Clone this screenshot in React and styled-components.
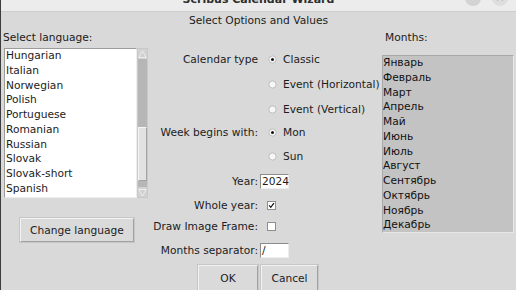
import React from 'react';
import styled, { createGlobalStyle } from 'styled-components';

const languages = [
  'Hungarian', 'Italian', 'Norwegian', 'Polish', 'Portuguese',
  'Romanian', 'Russian', 'Slovak', 'Slovak-short', 'Spanish',
];

const months = [
  'Январь', 'Февраль', 'Март', 'Апрель', 'Май', 'Июнь',
  'Июль', 'Август', 'Сентябрь', 'Октябрь', 'Ноябрь', 'Декабрь',
];

const GlobalStyle = createGlobalStyle`
  html, body {
    margin: 0;
    padding: 0;
    background: #d9d9d9;
  }
  body {
    font-family: "DejaVu Sans", "Noto Sans CJK SC", sans-serif;
    font-size: 10.67px;
    color: #1c1c1c;
  }
`;

const Radio = ({ checked, children }) => (
  <RadioItem>
    <svg width="9" height="9" viewBox="0 0 9 9">
      <circle cx="4.5" cy="4.5" r="3.6" fill="#f7f7f7" stroke="#b4b4b4" strokeWidth="0.8" />
      {checked && <circle cx="4.5" cy="4.5" r="1.5" fill="#111" />}
    </svg>
    <span>{children}</span>
  </RadioItem>
);

const Check = ({ checked }) => (
  <CheckBox>
    {checked && (
      <svg width="9" height="9" viewBox="0 0 9 9">
        <path d="M1.5 4.2 L3.6 6.8 L7.6 1.6" fill="none" stroke="#111" strokeWidth="1.6" />
      </svg>
    )}
  </CheckBox>
);

const Arrow = ({ down }) => (
  <ArrowBox>
    <svg width="9" height="9" viewBox="0 0 9 9">
      <path
        d={down ? 'M1 1.5 L8 1.5 L4.5 8 Z' : 'M1 7.5 L8 7.5 L4.5 1 Z'}
        fill="#cfcfcf"
        stroke="#f4f4f4"
        strokeWidth="0.8"
      />
    </svg>
  </ArrowBox>
);

const App = () => (
  <>
    <GlobalStyle />
    <Window>
      <TitleBar>
        <span />
        <TitleText>Scribus Calendar Wizard</TitleText>
        <WinButtons>
          <WinButton />
          <WinButton light>×</WinButton>
        </WinButtons>
      </TitleBar>
      <Header>Select Options and Values</Header>
      <Body>
        <LeftCol>
          <ColLabel>Select language:</ColLabel>
          <ListFrame>
            <LangList>
              {languages.map((lang) => (
                <Item key={lang}>{lang}</Item>
              ))}
            </LangList>
            <Scrollbar>
              <Arrow />
              <Trough>
                <TroughGap grow={70} />
                <Thumb grow={54} />
                <TroughGap grow={6} />
              </Trough>
              <Arrow down />
            </Scrollbar>
          </ListFrame>
          <Button wide>Change language</Button>
        </LeftCol>

        <MiddleCol>
          <Row h={26}>
            <Label>Calendar type</Label>
            <Control><Radio checked>Classic</Radio></Control>
          </Row>
          <Row h={25}>
            <Label />
            <Control><Radio>Event (Horizontal)</Radio></Control>
          </Row>
          <Row h={24}>
            <Label />
            <Control><Radio>Event (Vertical)</Radio></Control>
          </Row>
          <Row h={23}>
            <Label>Week begins with:</Label>
            <Control><Radio checked>Mon</Radio></Control>
          </Row>
          <Row h={25}>
            <Label />
            <Control><Radio>Sun</Radio></Control>
          </Row>
          <Row h={25}>
            <Label>Year:</Label>
            <Control><Entry>2024</Entry></Control>
          </Row>
          <Row h={23}>
            <Label>Whole year:</Label>
            <Control><Check checked /></Control>
          </Row>
          <Row h={18}>
            <Label>Draw Image Frame:</Label>
            <Control><Check /></Control>
          </Row>
          <Row h={30}>
            <Label>Months separator:</Label>
            <Control><Entry>/</Entry></Control>
          </Row>
          <ButtonRow>
            <Button w={60}>OK</Button>
            <Button w={57}>Cancel</Button>
          </ButtonRow>
        </MiddleCol>

        <RightCol>
          <ColLabel>Months:</ColLabel>
          <MonthList>
            {months.map((m) => (
              <Item key={m}>{m}</Item>
            ))}
          </MonthList>
        </RightCol>
      </Body>
    </Window>
  </>
);

const Window = styled.div`
  width: 516px;
  height: 290px;
  overflow: hidden;
  box-sizing: border-box;
  border-left: 1px solid #3d3d3d;
  display: flex;
  flex-direction: column;
  background: #d9d9d9;
`;

const TitleBar = styled.div`
  flex: none;
  height: 12px;
  box-sizing: border-box;
  background: #ececec;
  border-bottom: 1px solid #cdcdcd;
  display: grid;
  grid-template-columns: 1fr auto 1fr;
  overflow: hidden;
`;

const TitleText = styled.div`
  margin-top: -7px;
  font-size: 11px;
  font-weight: bold;
  line-height: 13px;
  color: #2e2e2e;
  white-space: nowrap;
`;

const WinButtons = styled.div`
  display: flex;
  justify-content: flex-end;
  gap: 11px;
  padding-right: 8px;
`;

const WinButton = styled.div`
  width: 16px;
  height: 16px;
  margin-top: -10px;
  border-radius: 50%;
  background: ${(p) => (p.light ? '#dedede' : '#d3d3d3')};
  color: #9a9a9a;
  font-size: 11px;
  line-height: 16px;
  text-align: center;
`;

const Header = styled.div`
  flex: none;
  height: 17px;
  line-height: 17px;
  text-align: center;
`;

const Body = styled.div`
  flex: 1;
  display: flex;
  min-height: 0;
`;

const LeftCol = styled.div`
  width: 149px;
  flex: none;
  padding-left: 2px;
  box-sizing: border-box;
  display: flex;
  flex-direction: column;
  align-items: flex-start;
`;

const ColLabel = styled.div`
  height: 18px;
  line-height: 18px;
  white-space: nowrap;
`;

const ListFrame = styled.div`
  margin: 1px 0 0 1px;
  height: 150px;
  display: flex;
`;

const LangList = styled.div`
  width: 133px;
  box-sizing: border-box;
  background: #ffffff;
  border: 1px solid;
  border-color: #9c9c9c #eeeeee #eeeeee #9c9c9c;
  padding-left: 1px;
  overflow: hidden;
`;

const Item = styled.div`
  height: 14.75px;
  line-height: 14.75px;
  white-space: nowrap;
`;

const Scrollbar = styled.div`
  width: 11px;
  display: flex;
  flex-direction: column;
  background: #b6b6b6;
  border: 1px solid #c9c9c9;
  box-sizing: border-box;
`;

const ArrowBox = styled.div`
  height: 10px;
  flex: none;
  display: flex;
  align-items: center;
  justify-content: center;
  background: #d2d2d2;
`;

const Trough = styled.div`
  flex: 1;
  display: flex;
  flex-direction: column;
`;

const TroughGap = styled.div`
  flex: ${(p) => p.grow} 0 0;
`;

const Thumb = styled.div`
  flex: ${(p) => p.grow} 0 0;
  background: #e2e2e2;
  border: 1px solid;
  border-color: #f6f6f6 #a3a3a3 #a3a3a3 #f6f6f6;
`;

const Button = styled.div`
  width: ${(p) => (p.wide ? 114 : p.w)}px;
  height: ${(p) => (p.wide ? 24 : 27)}px;
  margin: ${(p) => (p.wide ? '20px 0 0 17px' : '0')};
  box-sizing: border-box;
  background: #dadada;
  border: 1px solid;
  border-color: #f2f2f2 #a2a2a2 #a2a2a2 #f2f2f2;
  outline: 1px solid #c6c6c6;
  display: flex;
  align-items: center;
  justify-content: center;
  white-space: nowrap;
`;

const MiddleCol = styled.div`
  width: 230px;
  flex: none;
  padding-top: 17px;
  box-sizing: border-box;
  display: flex;
  flex-direction: column;
`;

const Row = styled.div`
  height: ${(p) => p.h}px;
  flex: none;
  display: grid;
  grid-template-columns: 108px 1fr;
  align-items: center;
`;

const Label = styled.div`
  text-align: right;
  white-space: nowrap;
`;

const Control = styled.div`
  padding-left: 2px;
  display: flex;
  align-items: center;
`;

const RadioItem = styled.div`
  display: flex;
  align-items: center;
  gap: 6px;
  margin-left: 8px;
  white-space: nowrap;
  svg {
    flex: none;
  }
`;

const CheckBox = styled.div`
  width: 9px;
  height: 9px;
  margin-left: 7px;
  box-sizing: border-box;
  background: #ffffff;
  border: 1px solid #8e8e8e;
  display: flex;
  align-items: center;
  justify-content: center;
`;

const Entry = styled.div`
  width: 29px;
  height: 15px;
  box-sizing: border-box;
  background: #ffffff;
  border: 1px solid;
  border-color: #8c8c8c #eeeeee #eeeeee #8c8c8c;
  padding-left: 1px;
  line-height: 13px;
`;

const ButtonRow = styled.div`
  display: flex;
  gap: 3px;
  padding-left: 48px;
`;

const RightCol = styled.div`
  flex: 1;
  padding-left: 2px;
  display: flex;
  flex-direction: column;
  align-items: flex-start;
  ${ColLabel} {
    padding-left: 3px;
  }
`;

const MonthList = styled.div`
  margin-top: 8px;
  width: 132px;
  height: 178px;
  box-sizing: border-box;
  background: #c3c3c3;
  border: 1px solid;
  border-color: #a8a8a8 #e6e6e6 #e6e6e6 #a8a8a8;
  padding-left: 0;
  overflow: hidden;
  ${Item} {
    color: #111111;
  }
`;

export default App;
